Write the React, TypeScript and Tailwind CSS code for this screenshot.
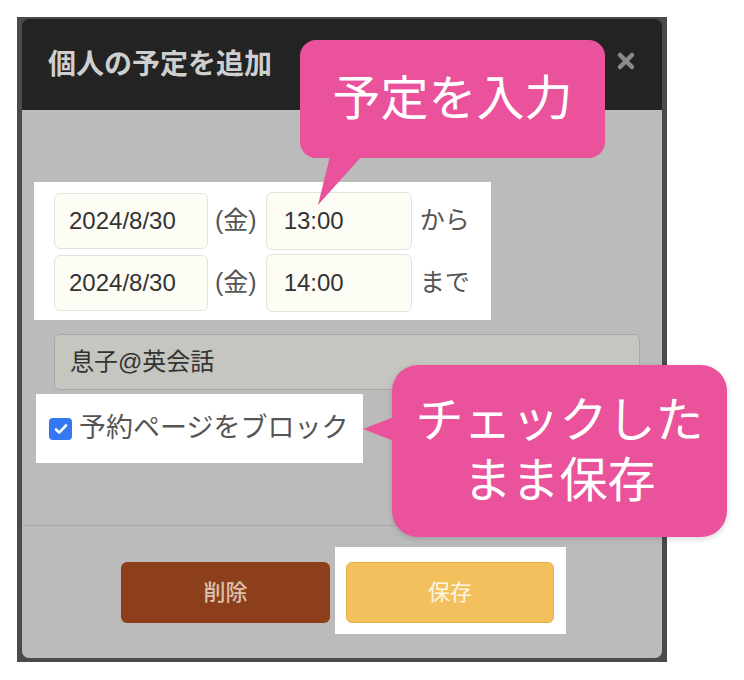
import React from "react";

const jp = '"Liberation Sans", "Noto Sans CJK JP", sans-serif';

function DateRow({ time, suffix }: { time: string; suffix: string }) {
  return (
    <div className="flex items-center">
      <div className="flex h-[56px] w-[154px] items-center rounded-[6px] border border-[#e3e3dc] bg-[#fdfdf6] pl-[14px] text-[24px] text-[#333]">
        2024/8/30
      </div>
      <span className="ml-[7px] text-[25px] text-[#555]">(金)</span>
      <div className="ml-[9px] flex h-[58px] w-[146px] items-center rounded-[6px] border border-[#e3e3dc] bg-[#fdfdf6] pl-[17px] text-[24px] text-[#333]">
        {time}
      </div>
      <span className="ml-[8px] text-[25px] text-[#555]">{suffix}</span>
    </div>
  );
}

export default function App() {
  return (
    <div className="relative h-[680px] w-[744px] overflow-hidden bg-white pl-[17px] pt-[17px]" style={{ fontFamily: jp }}>
      <div className="h-[645px] w-[650px] bg-[#4a4a4a] pl-[5px] pt-[2px]">
        <div className="w-[640px] overflow-hidden rounded-[7px]">
          {/* header */}
          <div className="flex h-[91px] items-center justify-between bg-[#232323] pl-[26px] pr-[26px]">
            <h1 className="text-[28px] font-bold text-[#cfcfcf]">個人の予定を追加</h1>
            <svg width="20" height="20" viewBox="0 0 20 20" className="-mt-[8px]">
              <path d="M4 4L16 16M16 4L4 16" stroke="#8a8a8a" strokeWidth="4.5" strokeLinecap="round" />
            </svg>
          </div>

          {/* body */}
          <div className="flex flex-col bg-[#bbbbbb] px-8 pb-[62px] pt-[72px]">
            <div className="-ml-5 flex flex-col gap-[4px] self-start bg-white pb-[8px] pl-5 pr-[21px] pt-[10px]">
              <DateRow time="13:00" suffix="から" />
              <DateRow time="14:00" suffix="まで" />
            </div>
            <div className="mt-[14px] flex h-[56px] w-[586px] items-center rounded-[6px] border border-[#a9a9a4] bg-[#c6c6c0] pl-[15px] text-[24px] text-[#333]">
              息子@英会話
            </div>
            <label className="-ml-[18px] mt-[4px] flex h-[69px] items-center self-start bg-white pl-[13px] pr-[15px]">
              <span className="flex h-[22px] w-[23px] items-center justify-center rounded-[4px] bg-[#3478f6]">
                <svg width="16" height="16" viewBox="0 0 16 16">
                  <path d="M3 8.5l3.2 3.2L13 4.5" fill="none" stroke="white" strokeWidth="2.6" strokeLinecap="round" strokeLinejoin="round" />
                </svg>
              </span>
              <span className="ml-[7px] text-[27px] text-[#555]">予約ページをブロック</span>
            </label>
          </div>

          {/* footer */}
          <div className="flex items-start border-t border-[#a9a9a9] bg-[#bbbbbb] pb-[24px] pl-[99px] pt-[21px]">
            <button className="mt-[15px] h-[61px] w-[209px] rounded-[6px] bg-[#8c3f1a] text-[22px] font-medium text-[#dcc1ae]">
              削除
            </button>
            <div className="ml-[5px] bg-white pb-[11px] pl-[11px] pr-[12px] pt-[15px]">
              <button className="h-[61px] w-[208px] rounded-[6px] border border-[#e6ad40] bg-[#f2c15d] text-[22px] text-[#fff6e3]">
                保存
              </button>
            </div>
          </div>
        </div>
      </div>

      {/* callout 1 */}
      <div className="absolute left-[300px] top-[40px] flex h-[118px] w-[305px] items-center justify-center rounded-[16px] bg-[#ea529b] text-[48px] text-white">
        予定を入力
      </div>
      <svg className="absolute left-[310px] top-[156px]" width="60" height="52" viewBox="0 0 60 52">
        <polygon points="20,0 52,0 8,49" fill="#ea529b" />
      </svg>

      {/* callout 2 */}
      <div className="absolute left-[392px] top-[365px] flex h-[172px] w-[335px] flex-col items-center justify-center rounded-[26px] bg-[#ea529b] text-[48px] leading-[60px] text-white shadow-[0_2px_6px_rgba(0,0,0,0.15)]">
        <span>チェックした</span>
        <span>まま保存</span>
      </div>
      <svg className="absolute left-[360px] top-[414px]" width="34" height="30" viewBox="0 0 34 30">
        <polygon points="34,3 34,27 3,15" fill="#ea529b" />
      </svg>
    </div>
  );
}
